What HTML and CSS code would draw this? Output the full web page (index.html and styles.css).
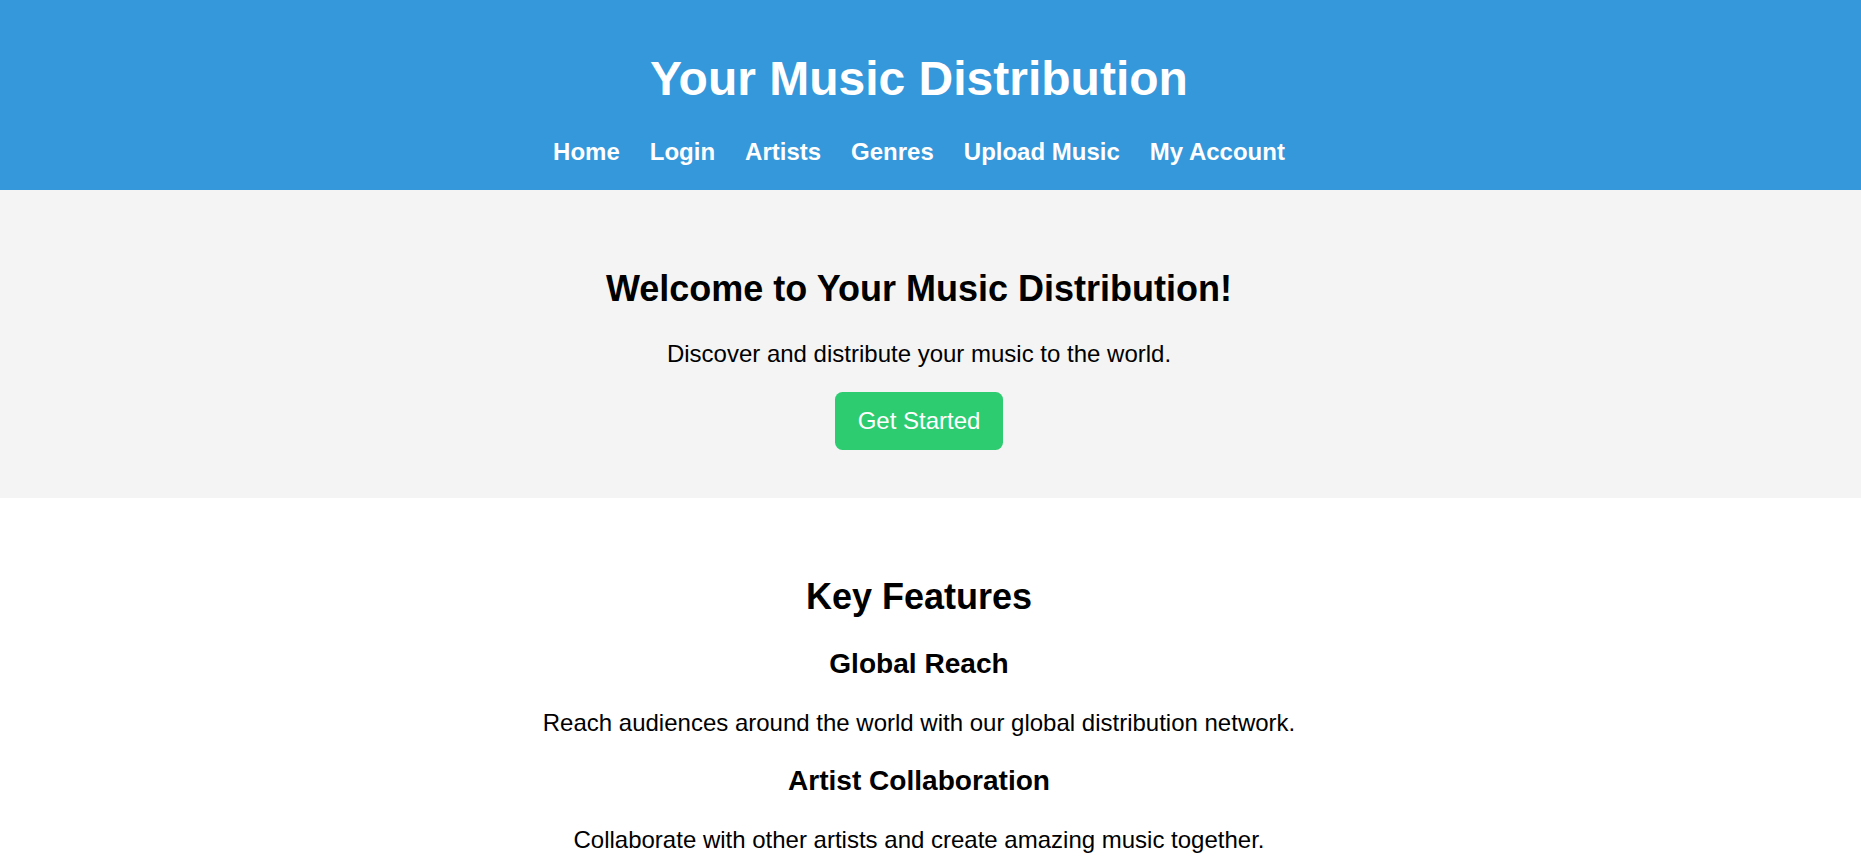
FILE: index.html
```html
<!DOCTYPE html>
<html lang="en">
<head>
<meta charset="utf-8">
<title>Your Music Distribution</title>
<link rel="stylesheet" href="styles.css">
</head>
<body>
<header class="site-header">
  <h1 class="site-title">Your Music Distribution</h1>
  <nav>
    <ul class="nav-list">
      <li><a href="#">Home</a></li>
      <li><a href="#">Login</a></li>
      <li><a href="#">Artists</a></li>
      <li><a href="#">Genres</a></li>
      <li><a href="#">Upload Music</a></li>
      <li><a href="#">My Account</a></li>
    </ul>
  </nav>
</header>
<section class="hero">
  <h2 class="section-title">Welcome to Your Music Distribution!</h2>
  <p class="text">Discover and distribute your music to the world.</p>
  <a href="#" class="btn">Get Started</a>
</section>
<section class="features">
  <h2 class="section-title">Key Features</h2>
  <div class="feature">
    <h3 class="feature-title">Global Reach</h3>
    <p class="text">Reach audiences around the world with our global distribution network.</p>
  </div>
  <div class="feature">
    <h3 class="feature-title">Artist Collaboration</h3>
    <p class="text">Collaborate with other artists and create amazing music together.</p>
  </div>
</section>
</body>
</html>
```
FILE: styles.css
```css
html, body {
  margin: 0;
  padding: 0;
}
body {
  font-family: "Liberation Sans", Arial, sans-serif;
  font-size: 24px;
  color: #000;
  background: #fff;
}
.site-header {
  background: #3498db;
  color: #fff;
  text-align: center;
  padding: 19px 23px 24px 0;
}
.site-title {
  font-size: 48px;
  font-weight: bold;
  margin: 32px 0 32px;
}
.nav-list {
  list-style: none;
  margin: 0;
  padding: 0;
  display: flex;
  justify-content: center;
  gap: 30px;
}
.nav-list a {
  color: #fff;
  text-decoration: none;
  font-weight: bold;
  font-size: 24px;
}
.hero {
  background: #f4f4f4;
  text-align: center;
  padding: 48px 23px 48px 0;
}
.features {
  text-align: center;
  padding: 48px 23px 48px 0;
}
.section-title {
  font-size: 36px;
  font-weight: bold;
  margin: 30px 0;
}
.text {
  font-size: 24px;
  margin: 24px 0;
}
.feature-title {
  font-size: 28.08px;
  font-weight: bold;
  margin: 28.5px 0;
}
.btn {
  display: inline-block;
  background: #2ecc71;
  color: #fff;
  text-decoration: none;
  font-size: 24px;
  padding: 15px 22.5px;
  border-radius: 7.5px;
}
```
